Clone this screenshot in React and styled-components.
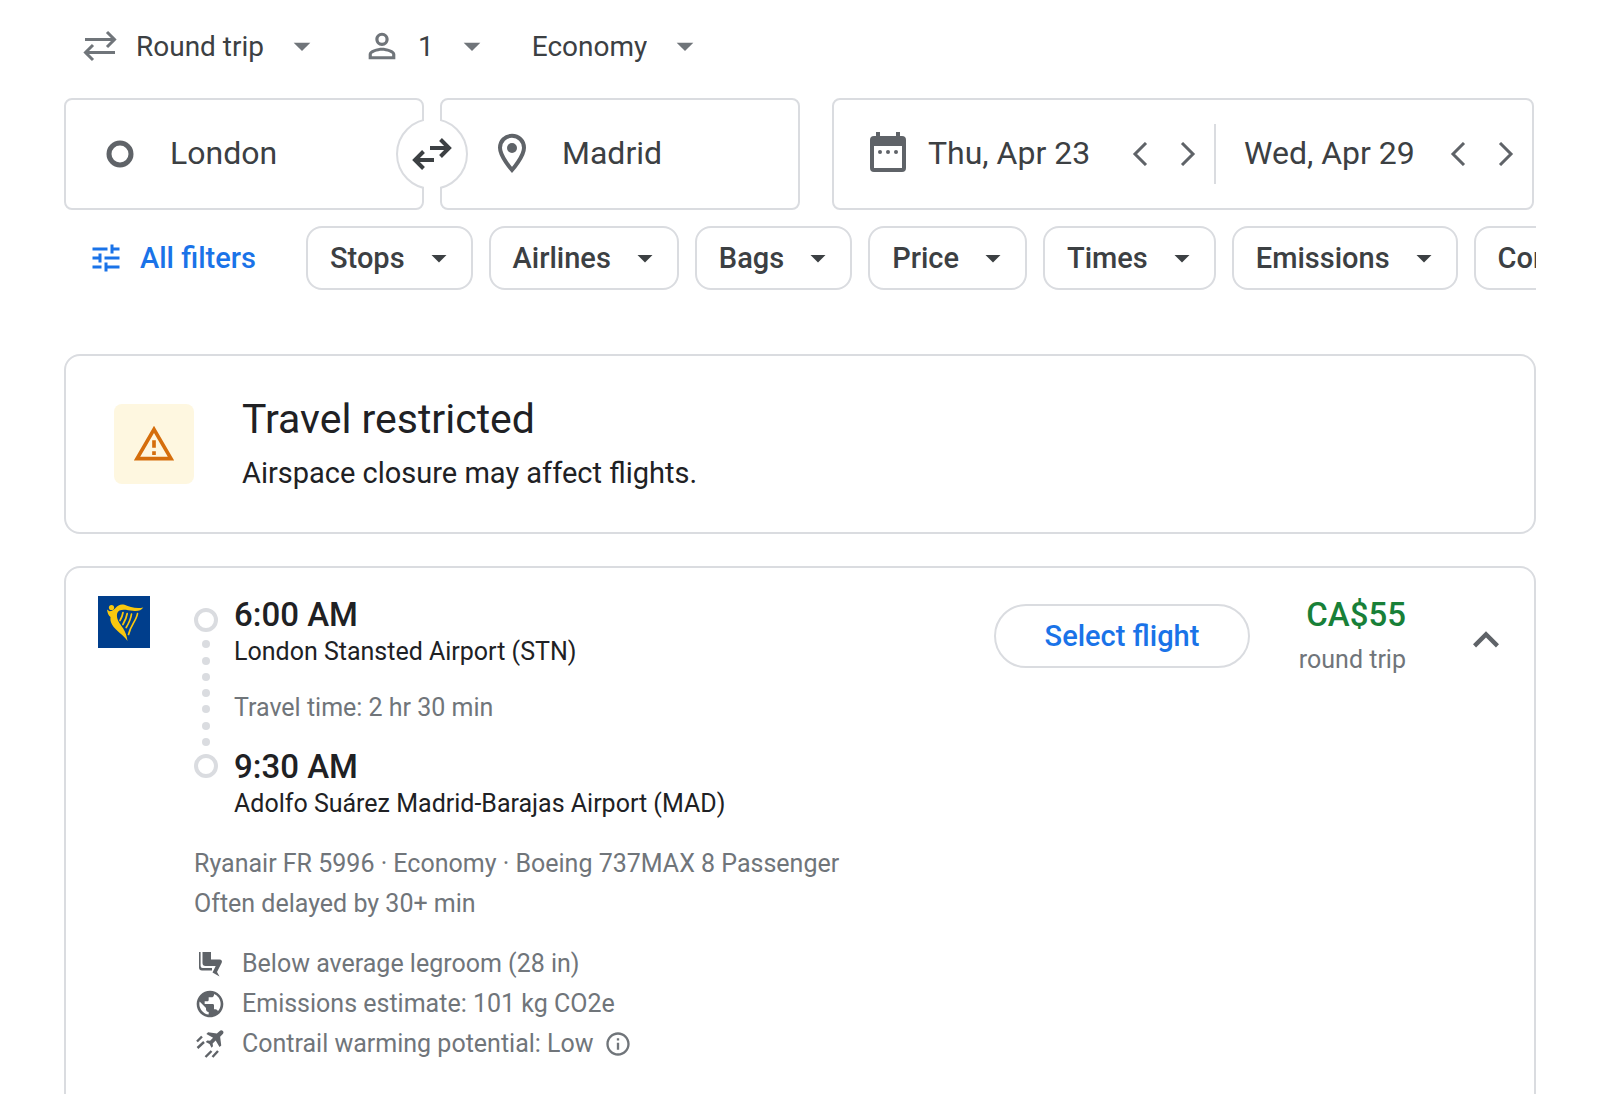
import React from 'react';
import styled, { createGlobalStyle } from 'styled-components';
import {
	MdArrowDropDown,
	MdExpandLess,
	MdInfoOutline,
	MdPersonOutline,
	MdPublic,
	MdTune,
} from 'react-icons/md';

const GlobalStyle = createGlobalStyle`
	*, *::before, *::after{
		box-sizing: border-box;
	}

	body{
		margin: 0;
		background-color: #fff;
		color: #202124;
		font-family: Roboto, "Liberation Sans", sans-serif;
		font-size: 25px;
		line-height: 32px;
	}

	button, input, select{
		margin: 0;
		padding: 0;
		border: none;
		background: none;
		color: inherit;
		font: inherit;
		outline: none;
	}

	button, select{
		cursor: pointer;
	}

	svg{
		display: block;
		flex: none;
	}

	h2, p, ul{
		margin: 0;
		padding: 0;
	}
`;

const Page = styled.main`
	padding: 14px 64px 64px;
`;

const TripOptions = styled.div`
	display: flex;
	align-items: center;
	gap: 40px;
	height: 64px;
	margin-bottom: 20px;
	padding-left: 16px;
	color: #70757a;
`;

const TripOption = styled.label`
	display: flex;
	align-items: center;

	> select{
		appearance: none;
		field-sizing: content;
		margin: 0 18px 0 16px;
		padding-top: 2px;
		color: #3c4043;
		font-size: 28px;
		line-height: 40px;
	}

	> select:first-child{
		margin-left: 0;
	}
`;

const SearchBar = styled.form`
	display: grid;
	grid-template-columns: 736fr 702fr;
	gap: 32px;
	margin-bottom: 16px;
	padding-right: 2px;
`;

const Places = styled.div`
	position: relative;
	display: grid;
	grid-template-columns: 1fr 1fr;
	gap: 16px;
`;

const Field = styled.label`
	display: flex;
	align-items: center;
	gap: 28px;
	min-width: 0;
	height: 112px;
	padding: 0 32px 0 ${props => (props.$afterSwap ? 48 : 32)}px;
	border: 2px solid #dadce0;
	border-radius: 8px;
	color: #5f6368;
`;

const FieldInput = styled.input`
	flex: 1;
	min-width: 0;
	padding-bottom: 2px;
	color: #3c4043;
	font-size: 32px;
	line-height: 40px;
`;

/* sits over the gap between the two places and hides the borders under it */
const SwapButton = styled.button`
	position: absolute;
	top: 50%;
	left: 50%;
	display: flex;
	align-items: center;
	justify-content: center;
	width: 72px;
	height: 72px;
	border: 2px solid #dadce0;
	border-radius: 50%;
	background-color: #fff;
	color: #3c4043;
	transform: translate(-50%, -50%);

	&::before{
		content: '';
		position: absolute;
		top: -2px;
		bottom: -2px;
		left: 26px;
		width: 16px;
		background-color: #fff;
	}

	> svg{
		position: relative;
	}
`;

const Dates = styled.div`
	display: grid;
	grid-template-columns: 380fr 318fr;
	align-items: center;
	height: 112px;
	border: 2px solid #dadce0;
	border-radius: 8px;
`;

const DateField = styled.div`
	display: flex;
	align-items: center;
	height: 60px;
	min-width: 0;
	padding: 0 2px 0 ${props => (props.$divided ? 28 : 32)}px;
	border-left: ${props => (props.$divided ? '2px solid #dadce0' : 'none')};
	color: #5f6368;

	> svg{
		margin-right: 18px;
	}
`;

const StepButton = styled.button`
	display: flex;
	align-items: center;
	justify-content: center;
	width: 48px;
	height: 48px;
`;

const Filters = styled.div`
	display: flex;
	gap: 16px;
	margin-bottom: 64px;
	overflow: hidden;
`;

const AllFilters = styled.button`
	display: flex;
	flex: none;
	align-items: center;
	gap: 16px;
	height: 64px;
	width: 226px;
	padding-left: 24px;
	color: #1a73e8;
	font-size: 29px;
	font-weight: 500;
`;

const Chip = styled.button`
	display: flex;
	flex: none;
	align-items: center;
	gap: 16px;
	height: 64px;
	padding: 0 14px 0 22px;
	border: 2px solid #dadce0;
	border-radius: 16px;
	color: #3c4043;
	font-size: 29px;
	font-weight: 500;
`;

const Card = styled.section`
	border: 2px solid #dadce0;
	border-radius: 16px;
`;

const Notice = styled(Card)`
	display: flex;
	align-items: center;
	gap: 48px;
	height: 180px;
	margin-bottom: 32px;
	padding: 0 48px;

	h2{
		font-size: 41px;
		font-weight: 400;
		line-height: 48px;
		margin-bottom: 10px;
	}

	p{
		font-size: 29px;
		line-height: 40px;
	}
`;

const NoticeIcon = styled.div`
	display: flex;
	align-items: center;
	justify-content: center;
	width: 80px;
	height: 80px;
	border-radius: 8px;
	background-color: #fef7e0;
	color: #d56e0c;
`;

const Flight = styled(Card)`
	display: flex;
	align-items: flex-start;
	padding: 28px 22px 64px 32px;
`;

const FlightBody = styled.div`
	flex: 1;
	min-width: 0;
	margin-left: 44px;
`;

const Legs = styled.div`
	display: flex;
	gap: 16px;
	margin-bottom: 24px;
`;

const Timeline = styled.div`
	display: flex;
	flex-direction: column;
	align-items: center;
	justify-content: space-between;
	width: 24px;
	height: 170px;
	margin-top: 12px;
`;

const Stop = styled.span`
	width: 24px;
	height: 24px;
	border: 4px solid #dadce0;
	border-radius: 50%;
`;

const Dot = styled.span`
	width: 8px;
	height: 8px;
	border-radius: 50%;
	background-color: #dadce0;
`;

const Time = styled.div`
	margin-bottom: 2px;
	font-size: 33px;
	font-weight: 500;
	line-height: 38px;
`;

const TravelTime = styled.p`
	margin: 24px 0;
	color: #70757a;
`;

const Facts = styled.div`
	margin-bottom: 20px;
	color: #70757a;
	line-height: 40px;
`;

const Amenities = styled.ul`
	list-style: none;
	color: #70757a;
	line-height: 40px;

	> li{
		display: flex;
		align-items: center;
		gap: 16px;
	}

	> li > svg{
		color: #5f6368;
	}
`;

const InfoButton = styled.button`
	margin-left: -6px;
`;

const SelectButton = styled.button`
	width: 256px;
	height: 64px;
	margin-top: 8px;
	border: 2px solid #dadce0;
	border-radius: 32px;
	color: #1a73e8;
	font-size: 29px;
	font-weight: 500;
`;

const Price = styled.div`
	width: 156px;
	text-align: right;
	color: #70757a;

	> strong{
		display: block;
		margin-bottom: 10px;
		color: #188038;
		font-size: 33px;
		font-weight: 500;
		line-height: 38px;
	}
`;

const CollapseButton = styled.button`
	margin: 18px 0 0 54px;
	color: #5f6368;
`;

const RoundTripIcon = () => (
	<svg width="40" height="36" viewBox="-2 0 40 36" fill="none" stroke="currentColor" strokeWidth="3">
		<path d="M3 11.500h29M25 4l7.500 7.500L25 19M33 24.500H4M11 17l-7.500 7.500L11 32" />
	</svg>
);

const SwapIcon = () => (
	<svg width="40" height="36" viewBox="0 0 40 36" fill="none" stroke="currentColor" strokeWidth="4">
		<path d="M18 12h18M28.500 3.500L37 12l-8.500 8.500M22 24H4M11.500 15.500L3 24l8.500 8.500" />
	</svg>
);

const OriginIcon = () => (
	<svg width="44" height="44" viewBox="0 0 44 44" fill="none" stroke="currentColor" strokeWidth="5">
		<circle cx="22" cy="22" r="11" />
	</svg>
);

const PinIcon = () => (
	<svg width="44" height="44" viewBox="0 0 44 44" fill="none">
		<path
			d="M22 3.800c-6.800 0-12 5.200-12 12C10 24.500 22 38 22 38s12-13.500 12-22.200c0-6.800-5.200-12-12-12z"
			stroke="currentColor"
			strokeWidth="4"
		/>
		<circle cx="22" cy="16" r="5" fill="currentColor" />
	</svg>
);

const CalendarIcon = () => (
	<svg width="44" height="44" viewBox="0 2 44 44" fill="currentColor">
		<path
			fillRule="evenodd"
			d="M10 2h4v4h16V2h4v4h2a4 4 0 0 1 4 4v28a4 4 0 0 1-4 4H8a4 4 0 0 1-4-4V10a4 4 0 0 1 4-4h2zM8 16v22h28V16z"
		/>
		<circle cx="14" cy="22" r="2" />
		<circle cx="22" cy="22" r="2" />
		<circle cx="30" cy="22" r="2" />
	</svg>
);

const StepIcon = ({ next }) => (
	<svg width="24" height="24" viewBox="0 0 24 24" fill="none" stroke="currentColor" strokeWidth="3">
		<path d={next ? 'M6 1l11 11L6 23' : 'M18 1L7 12l11 11'} />
	</svg>
);

const WarningIcon = () => (
	<svg width="44" height="44" viewBox="0 0 24 24" fill="currentColor">
		<path d="M12 5.990L19.530 19H4.470L12 5.990M12 2L1 21h22L12 2zm1 14h-2v2h2v-2zm0-6h-2v4h2v-4z" />
	</svg>
);

const RyanairLogo = () => (
	<svg width="52" height="52" viewBox="0 0 52 52" role="img" aria-label="Ryanair">
		<rect width="52" height="52" fill="#003e8c" />
		<g fill="#f9c80e">
			<circle cx="13.500" cy="11.500" r="2.600" />
			<path d="M9 13.500l2.500 1.800c2.500-.3 4.200-1.300 6-3.300 2.500-3 5.500-4.300 9-3.200 5.500 2 11 4.200 18.800 2.700-2 3.200-6 4-10.500 3.300-5-.8-10-2-13.300-.3-3 1.600-3.300 6-1.200 10.500 2.500 5.300 8 9 9.200 20C25.500 38.500 18 35.500 14 28.500c-1.500-2.700-1.800-5-1.500-7.500-2-1.500-3.200-4.200-3.500-7.500z" />
		</g>
		<g fill="none" stroke="#f9c80e" strokeWidth="1.700" strokeLinecap="round">
			<path d="M25 16.500c-.5 3-1.500 5.500-3 8M29.200 17.500c-.6 4-2 7-4.300 11M33.500 18c-.6 4.500-2.300 8.500-5.300 13.500M39.500 17.500c-1 7-6.500 11-9 21" />
		</g>
	</svg>
);

const LegroomIcon = () => (
	<svg width="32" height="32" viewBox="0 0 32 32" fill="currentColor">
		<path d="M5 4h1.600v14a2 2 0 0 0 2 2H18v2.500H8a3 3 0 0 1-3-3z" />
		<path d="M8.500 4H17v7.500h8.500c2 0 3 1.500 2.200 3.200L23 24l2.500 4.500-7-4 3.200-6.500H11.500a3 3 0 0 1-3-3z" />
	</svg>
);

const ContrailIcon = () => (
	<svg width="32" height="32" viewBox="0 0 32 32" fill="currentColor">
		<path
			transform="translate(4.200 .2) scale(.86)"
			d="M28.700 3.300c1 1 .9 2.400-.1 3.500L25.500 10l1.300 10-2 2-4.500-7.800-3.500 3.500.4 3.300-1.700 1.700-2.300-4.400-4.400-2.300 1.700-1.700 3.300.4 3.500-3.500L9.500 6.700l2-2 10.200 1.500 3.300-3c1-1 2.700-1 3.700.1z"
		/>
		<path
			d="M3 13.500l5-5M3.500 20l6.500-6M11.500 29l6-6M18.500 29l5.500-6"
			fill="none"
			stroke="currentColor"
			strokeWidth="2.400"
		/>
	</svg>
);

const chips = ['Stops', 'Airlines', 'Bags', 'Price', 'Times', 'Emissions', 'Connecting airports'];

const Caret = ({ size = 36 }) => <MdArrowDropDown size={size} aria-hidden="true" />;

const App = () => (
	<>
		<GlobalStyle />
		<Page>
			<TripOptions>
				<TripOption>
					<RoundTripIcon />
					<select aria-label="Ticket type" defaultValue="Round trip">
						<option>Round trip</option>
						<option>One way</option>
					</select>
					<Caret size={40} />
				</TripOption>
				<TripOption>
					<MdPersonOutline size={40} />
					<select aria-label="Passengers" defaultValue="1">
						<option>1</option>
						<option>2</option>
					</select>
					<Caret size={40} />
				</TripOption>
				<TripOption>
					<select aria-label="Seating class" defaultValue="Economy">
						<option>Economy</option>
						<option>Business</option>
					</select>
					<Caret size={40} />
				</TripOption>
			</TripOptions>

			<SearchBar onSubmit={e => e.preventDefault()}>
				<Places>
					<Field>
						<OriginIcon />
						<FieldInput aria-label="Where from?" defaultValue="London" />
					</Field>
					<Field $afterSwap>
						<PinIcon />
						<FieldInput aria-label="Where to?" defaultValue="Madrid" />
					</Field>
					<SwapButton type="button" aria-label="Swap origin and destination">
						<SwapIcon />
					</SwapButton>
				</Places>
				<Dates>
					<DateField>
						<CalendarIcon />
						<FieldInput aria-label="Departure" defaultValue="Thu, Apr 23" />
						<StepButton type="button" aria-label="Earlier departure"><StepIcon /></StepButton>
						<StepButton type="button" aria-label="Later departure"><StepIcon next /></StepButton>
					</DateField>
					<DateField $divided>
						<FieldInput aria-label="Return" defaultValue="Wed, Apr 29" />
						<StepButton type="button" aria-label="Earlier return"><StepIcon /></StepButton>
						<StepButton type="button" aria-label="Later return"><StepIcon next /></StepButton>
					</DateField>
				</Dates>
			</SearchBar>

			<Filters>
				<AllFilters type="button">
					<MdTune size={36} />
					All filters
				</AllFilters>
				{chips.map(name => (
					<Chip key={name} type="button" aria-haspopup="dialog">
						{name}
						<Caret />
					</Chip>
				))}
			</Filters>

			<Notice>
				<NoticeIcon>
					<WarningIcon />
				</NoticeIcon>
				<div>
					<h2>Travel restricted</h2>
					<p>Airspace closure may affect flights.</p>
				</div>
			</Notice>

			<Flight>
				<RyanairLogo />
				<FlightBody>
					<Legs>
						<Timeline>
							<Stop />
							{[1, 2, 3, 4, 5, 6, 7].map(n => <Dot key={n} />)}
							<Stop />
						</Timeline>
						<div>
							<Time>6:00 AM</Time>
							<p>London Stansted Airport (STN)</p>
							<TravelTime>Travel time: 2 hr 30 min</TravelTime>
							<Time>9:30 AM</Time>
							<p>Adolfo Suárez Madrid-Barajas Airport (MAD)</p>
						</div>
					</Legs>
					<Facts>
						<p>Ryanair FR 5996 · Economy · Boeing 737MAX 8 Passenger</p>
						<p>Often delayed by 30+ min</p>
					</Facts>
					<Amenities>
						<li><LegroomIcon />Below average legroom (28 in)</li>
						<li><MdPublic size={32} />Emissions estimate: 101 kg CO2e</li>
						<li>
							<ContrailIcon />
							Contrail warming potential: Low
							<InfoButton type="button" aria-label="About contrails">
								<MdInfoOutline size={28} />
							</InfoButton>
						</li>
					</Amenities>
				</FlightBody>
				<SelectButton type="button">Select flight</SelectButton>
				<Price>
					<strong>CA$55</strong>
					round trip
				</Price>
				<CollapseButton type="button" aria-label="Collapse details">
					<MdExpandLess size={52} />
				</CollapseButton>
			</Flight>
		</Page>
	</>
);

export default App;
